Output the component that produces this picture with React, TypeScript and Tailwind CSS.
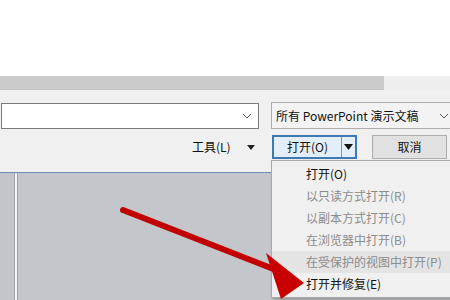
import React from 'react';

const font = { fontFamily: '"Noto Sans CJK SC", "Microsoft YaHei", sans-serif' };

const menuItems = [
  { label: '打开(O)', enabled: true },
  { label: '以只读方式打开(R)', enabled: false },
  { label: '以副本方式打开(C)', enabled: false },
  { label: '在浏览器中打开(B)', enabled: false },
  { label: '在受保护的视图中打开(P)', enabled: false, hover: true },
  { label: '打开并修复(E)', enabled: true },
];

function App() {
  return (
    <div className="relative w-[450px] h-[300px] overflow-hidden bg-white text-[12px]" style={font}>
      {/* top blank */}
      <div className="h-[76px] bg-white" />

      {/* gray strip */}
      <div className="flex h-[14px]">
        <div className="w-[384px] shrink-0 bg-[#cbcbcb] border-b border-[#c2c2c2]" />
        <div className="flex-1 bg-[#eeeeee]" />
      </div>

      {/* dialog footer */}
      <div className="h-[82px] bg-[#f0f0f0] pt-[12px]">
        <div className="flex items-start">
          <div className="shrink-0 ml-[1px] mt-[1px] w-[258px] h-[26px] bg-white border border-[#7a7a7a] flex items-center justify-end pr-[6px]">
            <svg width="10" height="6" viewBox="0 0 10 6">
              <path d="M1 1 L5 5 L9 1" fill="none" stroke="#555" strokeWidth="1" />
            </svg>
          </div>
          <div className="shrink-0 ml-[12px] w-[190px] h-[27px] bg-[#f3f3f3] border border-[#adadad] flex items-center pl-[4px] pr-[11px] text-[#111] whitespace-nowrap">
            <span>所有 PowerPoint 演示文稿</span>
            <svg className="ml-auto" width="10" height="6" viewBox="0 0 10 6">
              <path d="M1 1 L5 5 L9 1" fill="none" stroke="#555" strokeWidth="1" />
            </svg>
          </div>
        </div>
        <div className="flex items-center mt-[6px]">
          <div className="shrink-0 ml-[192px] w-[55px] text-[#111] leading-none">工具(L)</div>
          <svg className="shrink-0" width="8" height="5" viewBox="0 0 8 5">
            <path d="M0 0 L8 0 L4 5 Z" fill="#222" />
          </svg>
          <div className="shrink-0 ml-[17px] w-[85px] h-[24px] border-2 border-[#3d7ab3] bg-[#e3eef8] flex items-center">
            <div className="w-[68px] h-full flex items-center justify-center text-[#111] border-r border-[#7a96b3]">打开(O)</div>
            <div className="flex-1 flex items-center justify-center">
              <svg width="9" height="6" viewBox="0 0 9 6">
                <path d="M0 0 L9 0 L4.5 6 Z" fill="#111" />
              </svg>
            </div>
          </div>
          <div className="shrink-0 ml-[15px] w-[75px] h-[24px] border border-[#adadad] bg-[#e1e1e1] flex items-center justify-center text-[#111]">
            取消
          </div>
        </div>
      </div>

      {/* workspace */}
      <div className="h-[128px] border-t border-[#6f8db0] bg-[#c4c7cb] flex">
        <div className="w-[14px] bg-[#c2c5c9]" />
        <div className="w-[4px] bg-[#f4f5f6] border-l border-r border-[#9ea2a7]" />
        <div className="flex-1 bg-[#c3c6ca]" />
      </div>

      {/* dropdown menu */}
      <div className="absolute left-[271px] top-[160px] w-[185px] h-[138px] bg-[#f0f0f0] border border-[#a9a9a9] shadow-[2px_2px_3px_rgba(0,0,0,0.25)] pt-[2px]">
        {menuItems.map((item, i) => (
          <div
            key={i}
            className={`h-[22px] flex items-center pl-[34px] whitespace-nowrap ${item.hover ? 'bg-[#e4e4e4]' : ''} ${item.enabled ? 'text-[#111]' : 'text-[#8c8c8c]'}`}
          >
            {item.label}
          </div>
        ))}
      </div>

      {/* red arrow */}
      <svg className="absolute left-0 top-0 pointer-events-none" width="450" height="300" viewBox="0 0 450 300">
        <line x1="123" y1="210" x2="276" y2="270" stroke="#c10000" strokeWidth="6" strokeLinecap="round" />
        <polygon points="304,283 266,253 281,299" fill="#c80000" />
      </svg>
    </div>
  );
}

export default App;
